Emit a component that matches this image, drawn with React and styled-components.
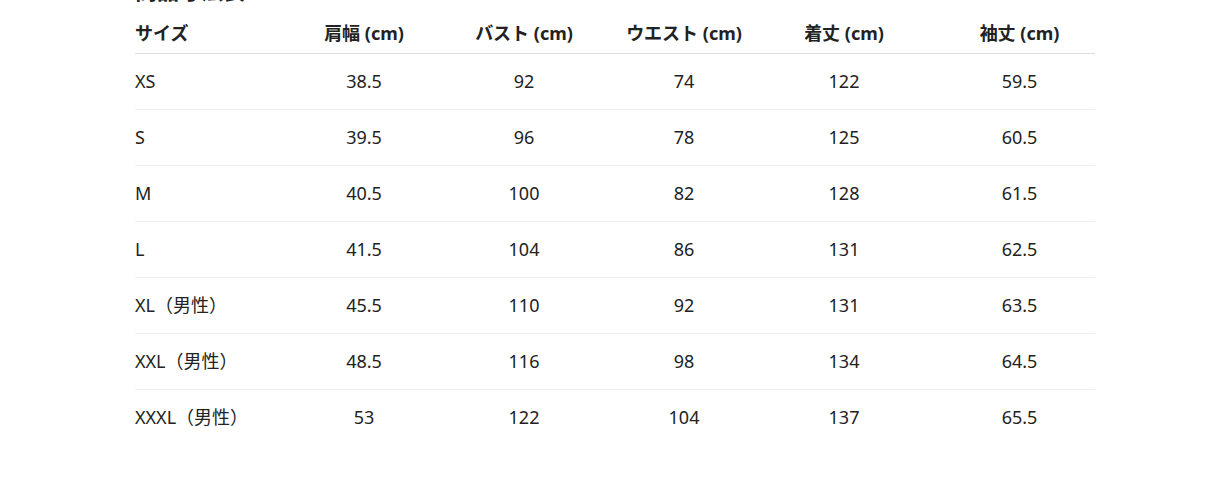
import React from 'react';
import styled, { createGlobalStyle } from 'styled-components';

const GlobalStyle = createGlobalStyle`
  html, body {
    margin: 0;
    padding: 0;
    background: #ffffff;
  }
  body {
    font-family: "Noto Sans", "Noto Sans CJK JP", sans-serif;
    color: #222222;
    overflow: hidden;
  }
`;

const COLUMNS = ['サイズ', '肩幅 (cm)', 'バスト (cm)', 'ウエスト (cm)', '着丈 (cm)', '袖丈 (cm)'];

const ROWS = [
  ['XS', '38.5', '92', '74', '122', '59.5'],
  ['S', '39.5', '96', '78', '125', '60.5'],
  ['M', '40.5', '100', '82', '128', '61.5'],
  ['L', '41.5', '104', '86', '131', '62.5'],
  ['XL（男性）', '45.5', '110', '92', '131', '63.5'],
  ['XXL（男性）', '48.5', '116', '98', '134', '64.5'],
  ['XXXL（男性）', '53', '122', '104', '137', '65.5'],
];

function SizeChart() {
  return (
    <Section>
      <Title>商品寸法表</Title>
      <Table>
        <HeaderRow>
          {COLUMNS.map((label, i) => (
            <HeadCell key={label} $first={i === 0} $last={i === COLUMNS.length - 1}>
              {label}
            </HeadCell>
          ))}
        </HeaderRow>
        {ROWS.map((row, r) => (
          <BodyRow key={row[0]} $last={r === ROWS.length - 1}>
            {row.map((value, i) => (
              <Cell key={i} $first={i === 0} $last={i === row.length - 1}>
                {value}
              </Cell>
            ))}
          </BodyRow>
        ))}
      </Table>
    </Section>
  );
}

const Section = styled.section`
  width: 960px;
  margin: -25px 0 0 135px;
`;

const Title = styled.h2`
  margin: 0;
  font-size: 22px;
  line-height: 30px;
  font-weight: 700;
  color: #222222;
`;

const Table = styled.div`
  display: flex;
  flex-direction: column;
`;

const gridColumns = `149px 160px 160px 160px 160px 1fr`;

const HeaderRow = styled.div`
  display: grid;
  grid-template-columns: ${gridColumns};
  border-bottom: 1px solid #dddddd;
`;

const BodyRow = styled.div`
  display: grid;
  grid-template-columns: ${gridColumns};
  height: 56px;
  align-items: center;
  border-bottom: 1px solid ${(p) => (p.$last ? 'transparent' : '#eeeeee')};
  box-sizing: border-box;
`;

const HeadCell = styled.div`
  padding: 16px 0 7px ${(p) => (p.$last ? '20px' : '0')};
  font-size: 18px;
  line-height: 25px;
  font-weight: 700;
  text-align: ${(p) => (p.$first ? 'left' : 'center')};
  white-space: nowrap;
`;

const Cell = styled.div`
  padding-left: ${(p) => (p.$last ? '20px' : '0')};
  font-size: 18px;
  line-height: 25px;
  font-weight: 400;
  text-align: ${(p) => (p.$first ? 'left' : 'center')};
  white-space: nowrap;
`;

export default function App() {
  return (
    <>
      <GlobalStyle />
      <SizeChart />
    </>
  );
}
